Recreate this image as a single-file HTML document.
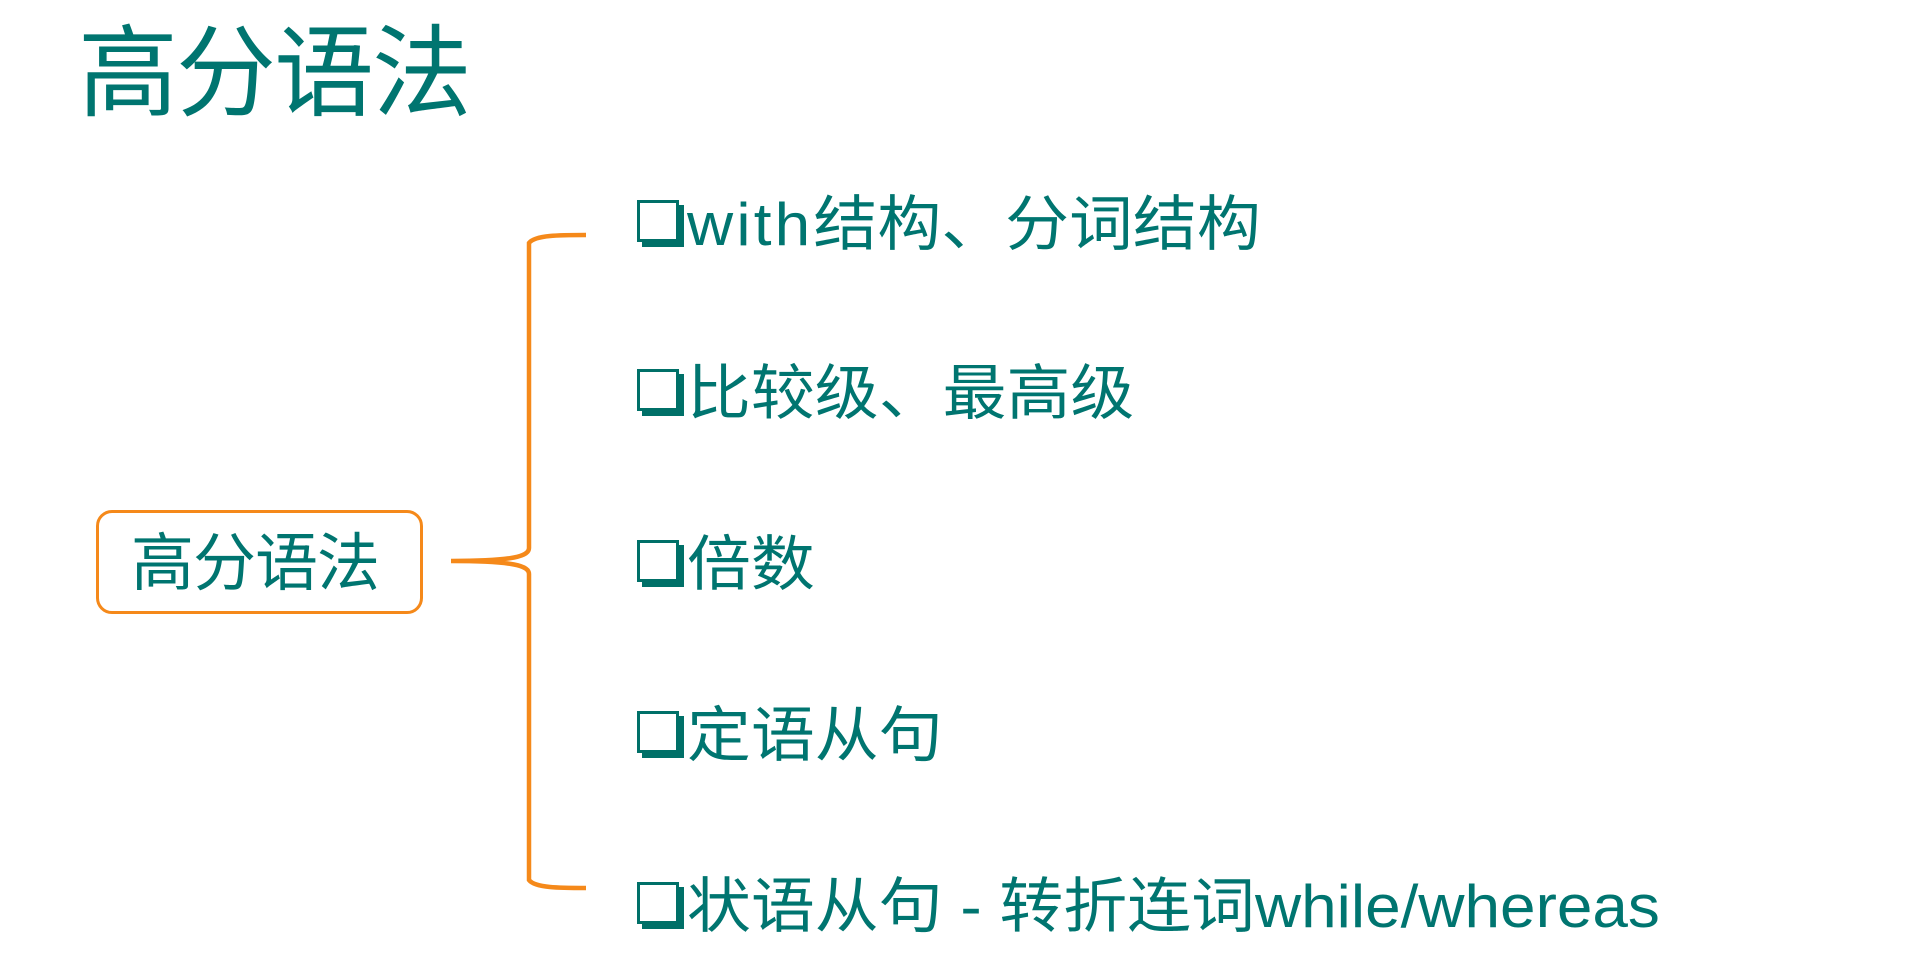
<!DOCTYPE html>
<html><head><meta charset="utf-8"><style>
body{margin:0;width:1921px;height:979px;background:#fff;position:relative;overflow:hidden;font-family:"Liberation Sans","Noto Sans CJK SC",sans-serif;color:#007570}
.t{position:absolute;line-height:1;white-space:nowrap;transform-origin:left center}
.cb{position:absolute;left:637px;width:36px;height:36px;border:3px solid #007068;box-shadow:5px 5px 0 #007068;background:#fff}
.it{position:absolute;left:687px;font-size:60px;line-height:1;white-space:nowrap;transform:scaleX(1.065);transform-origin:left center}
</style></head><body>
<div class="t" style="left:78px;top:24px;font-size:100px;letter-spacing:-2px">高分语法</div>
<div style="position:absolute;left:96px;top:510px;width:327px;height:104px;border:3px solid #f5891a;border-radius:16px;box-sizing:border-box"></div>
<div class="t" style="left:131px;top:533px;font-size:63px;letter-spacing:-1px">高分语法</div>
<svg style="position:absolute;left:0;top:0" width="1921" height="979">
<path d="M586 235 C560 235 535 235 529 243 L529 548 C529 556 515 561 451 561 M451 561 C515 561 529 566 529 574 L529 880 C535 888 560 888 586 888" fill="none" stroke="#f5891a" stroke-width="4.5"/>
</svg>
<div class="cb" style="top:200px"></div><div class="it" style="top:195px"><span style="letter-spacing:3px">with</span>结构、分词结构</div>
<div class="cb" style="top:369px"></div><div class="it" style="top:364px">比较级、最高级</div>
<div class="cb" style="top:540px"></div><div class="it" style="top:535px">倍数</div>
<div class="cb" style="top:711px"></div><div class="it" style="top:706px">定语从句</div>
<div class="cb" style="top:882px"></div><div class="it" style="top:877px">状语从句 - 转折连词while/whereas</div>
</body></html>
